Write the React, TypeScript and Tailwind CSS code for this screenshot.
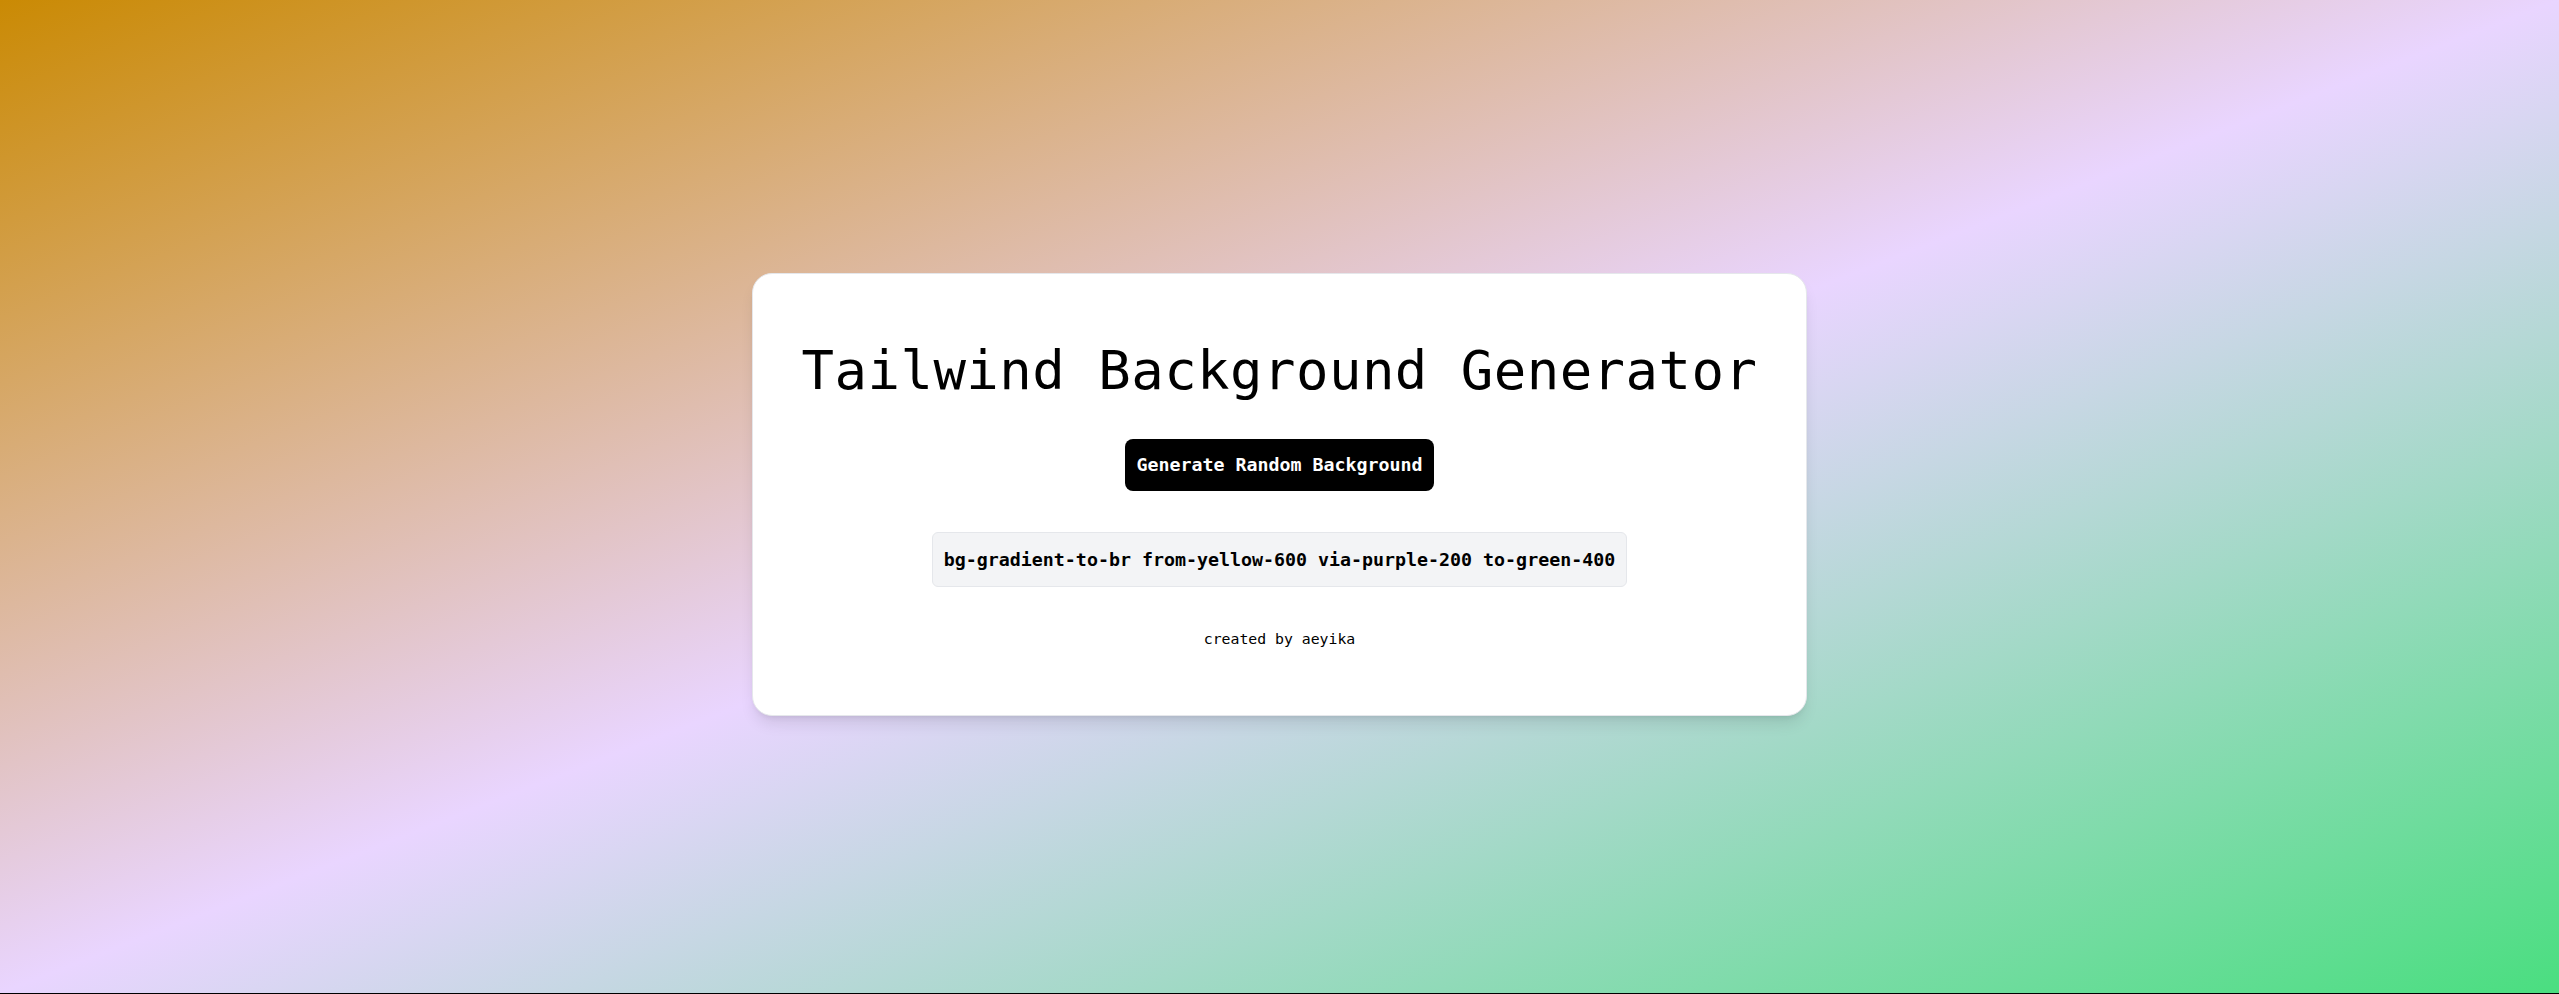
import React from "react";

export default function App() {
  return (
    <div className="h-screen w-full bg-black overflow-hidden">
      <div
        className="h-[993px] w-full pb-1 flex items-center justify-center bg-[linear-gradient(to_bottom_right,#ca8a04,#e9d5ff,#4ade80)]"
        style={{ fontFamily: '"DejaVu Sans Mono", "Liberation Mono", monospace' }}
      >
        <div className="w-[1055px] h-[443px] bg-white rounded-[20px] border border-gray-200 shadow-lg pt-[70px] flex flex-col items-center">
          <h1 className="text-[54px] leading-[54px] tracking-[0.45px] font-normal text-black">
            Tailwind Background Generator
          </h1>
          <button className="mt-[41px] bg-black text-white font-bold text-[18.3px] leading-[28px] py-3 px-[11px] rounded-lg">
            Generate Random Background
          </button>
          <div className="mt-[41px] bg-gray-100 border border-gray-200 rounded-md px-[11px] py-3 text-[18.3px] leading-[29px] font-bold text-black">
            bg-gradient-to-br from-yellow-600 via-purple-200 to-green-400
          </div>
          <p className="mt-10 text-[14.8px] leading-[24px] text-black">created by aeyika</p>
        </div>
      </div>
    </div>
  );
}
